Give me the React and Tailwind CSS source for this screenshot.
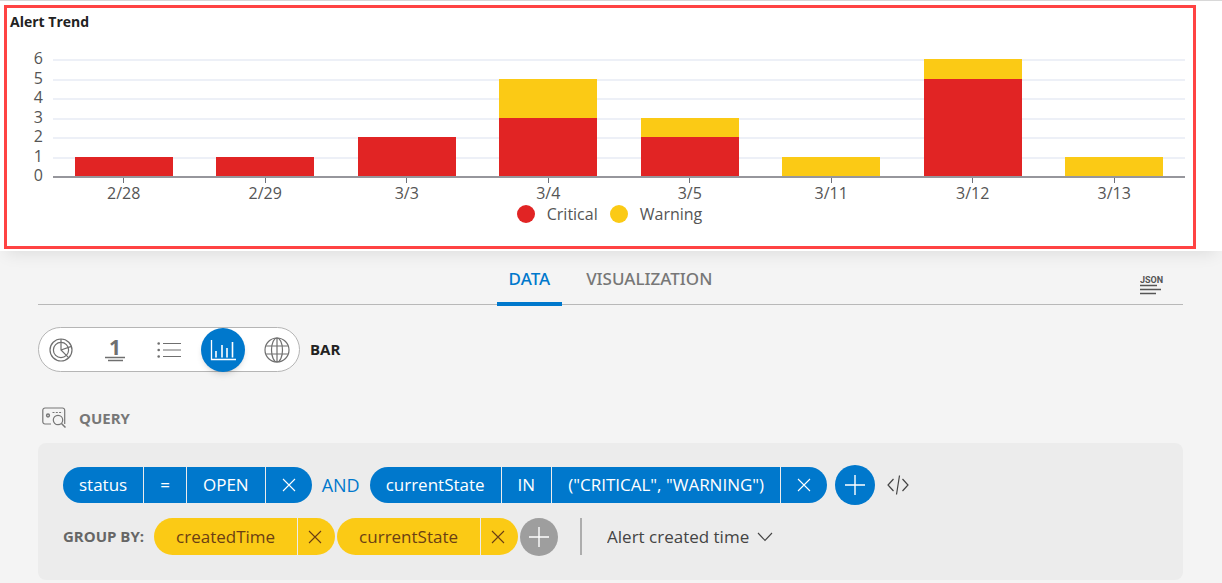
import React, { useState } from 'react';
import clsx from 'clsx';

const MAX = 6;

const trend = [
  { day: '2/28', critical: 1, warning: 0 },
  { day: '2/29', critical: 1, warning: 0 },
  { day: '3/3', critical: 2, warning: 0 },
  { day: '3/4', critical: 3, warning: 2 },
  { day: '3/5', critical: 2, warning: 1 },
  { day: '3/11', critical: 0, warning: 1 },
  { day: '3/12', critical: 5, warning: 1 },
  { day: '3/13', critical: 0, warning: 1 },
];

const levels = [6, 5, 4, 3, 2, 1, 0];

const filters = [
  { field: 'status', op: '=', value: 'OPEN' },
  { field: 'currentState', op: 'IN', value: '("CRITICAL", "WARNING")' },
];

const groups = ['createdTime', 'currentState'];

const PieIcon = () => (
  <svg width="24" height="24" viewBox="0 0 24 24" fill="none" stroke="currentColor" strokeWidth="1.2">
    <circle cx="12" cy="12" r="11" />
    <circle cx="12" cy="12" r="7.6" />
    <path d="M12 1v11l7.8 7.8M12 12l10.4-3.6" />
  </svg>
);

const NumberIcon = () => (
  <svg width="22" height="36" viewBox="0 -7 22 36">
    <text x="11" y="16" textAnchor="middle" fontSize="21" fontWeight="700" fill="currentColor">1</text>
    <path d="M1 18.5h20M4 21.5h15" stroke="currentColor" strokeWidth="1.3" />
  </svg>
);

const ListIcon = () => (
  <svg width="24" height="18" viewBox="0 0 24 18" stroke="currentColor" strokeWidth="1.2">
    <path d="M6 2.5h18M6 9h18M6 15.5h18" />
    <g fill="currentColor" stroke="none">
      <circle cx="1.7" cy="2.5" r="1.3" />
      <circle cx="1.7" cy="9" r="1.3" />
      <circle cx="1.7" cy="15.5" r="1.3" />
    </g>
  </svg>
);

const BarIcon = () => (
  <svg width="26" height="22" viewBox="0 0 26 22" fill="none" stroke="currentColor">
    <path d="M1.5 1v19.5H26" strokeWidth="1.3" />
    <path d="M6 12v6.5M12 6v12.5M17 9v9.5M22.5 3v15.5" strokeWidth="1.6" />
  </svg>
);

const GlobeIcon = () => (
  <svg width="26" height="26" viewBox="0 0 26 26" fill="none" stroke="currentColor" strokeWidth="1.2">
    <circle cx="13" cy="13" r="12" />
    <ellipse cx="13" cy="13" rx="5.5" ry="12" />
    <path d="M13 1v24M2.2 9h21.6M2.2 17h21.6" />
  </svg>
);

const QueryIcon = () => (
  <svg width="24" height="21" viewBox="0 0 24 21" fill="none" stroke="currentColor" strokeWidth="1.2">
    <path d="M9 17H3a2.2 2.2 0 0 1-2.2-2.2V3.2A2.2 2.2 0 0 1 3 1h17.5a2.2 2.2 0 0 1 2.2 2.2V17" />
    <circle cx="6" cy="8.5" r="1.4" strokeWidth="1.5" />
    <path d="M10.5 5.5h10" strokeDasharray="2 1.3" />
    <circle cx="16" cy="13" r="4.7" />
    <path d="M19.5 16.5l4 4" strokeWidth="1.5" />
  </svg>
);

const JsonIcon = () => (
  <svg width="24" height="24" viewBox="0 0 24 24">
    <text x="0" y="10" fontSize="9" fontWeight="700" fontFamily="Roboto, sans-serif" fill="currentColor">JSON</text>
    <path d="M0 12.5h17M0 16.5h21M0 20.5h16" stroke="currentColor" strokeWidth="1.4" />
  </svg>
);

const CloseIcon = () => (
  <svg width="14" height="14" viewBox="0 0 14 14" stroke="currentColor" strokeWidth="1.1">
    <path d="M1 1l12 12M13 1L1 13" />
  </svg>
);

const PlusIcon = () => (
  <svg width="20" height="20" viewBox="0 0 20 20" stroke="currentColor" strokeWidth="1.4">
    <path d="M10 0v20M0 10h20" />
  </svg>
);

const CodeIcon = () => (
  <svg width="22" height="20" viewBox="0 0 22 20" fill="none" stroke="currentColor" strokeWidth="1.2">
    <path d="M6.5 4L1 10l5.5 6M15.5 4l5.5 6-5.5 6M12.5 0.5l-3 19" />
  </svg>
);

const ChevronIcon = () => (
  <svg width="16" height="10" viewBox="0 0 16 10" fill="none" stroke="currentColor" strokeWidth="1.1">
    <path d="M1 1l7 7.5L15 1" />
  </svg>
);

const chartTypes = [
  { id: 'PIE', Icon: PieIcon },
  { id: 'NUMBER', Icon: NumberIcon },
  { id: 'LIST', Icon: ListIcon },
  { id: 'BAR', Icon: BarIcon },
  { id: 'MAP', Icon: GlobeIcon },
];

const TrendChart = () => (
  <div className="border-3 border-[#ff4343] pl-[3px] pr-2 pt-1 pb-[22px]">
    <h2 className="text-sm leading-5 font-bold text-[#222]">Alert Trend</h2>

    <div className="mt-4 flex gap-[10px] text-base leading-5 text-[#555]">
      <div className="w-[33px] h-[133px] mt-[2px] flex flex-col justify-between text-right leading-4">
        {levels.map((n) => (
          <span key={n}>{n}</span>
        ))}
      </div>

      <div className="flex-1 pt-[11px]">
        <div className="grid h-[119px]">
          <div className="col-start-1 row-start-1 flex flex-col justify-between">
            {levels.map((n) => (
              <div key={n} className="h-[2px] bg-[#edf0f7]" />
            ))}
          </div>
          <div className="col-start-1 row-start-1 flex border-b-2 border-[#96969c]">
            {trend.map((d) => (
              <div key={d.day} className="flex-1 flex flex-col justify-end items-center">
                <div className="w-[69%] bg-[#fbca15]" style={{ height: `${(d.warning / MAX) * 100}%` }} />
                <div className="w-[69%] bg-[#e12424]" style={{ height: `${(d.critical / MAX) * 100}%` }} />
              </div>
            ))}
          </div>
        </div>
        <div className="flex">
          {trend.map((d) => (
            <div key={d.day} className="flex-1 flex flex-col items-center">
              <div className="w-px h-[5px] bg-[#6e7079]" />
              <span>{d.day}</span>
            </div>
          ))}
        </div>
      </div>
    </div>

    <div className="mt-px flex justify-center gap-3 pl-6 text-base leading-5 text-[#555]">
      <span className="flex items-center gap-3">
        <span className="size-[18px] rounded-full bg-[#e12424]" />
        Critical
      </span>
      <span className="flex items-center gap-3">
        <span className="size-[18px] rounded-full bg-[#fbca15]" />
        Warning
      </span>
    </div>
  </div>
);

const FilterChip = ({ filter }) => (
  <div className="h-9 flex gap-px rounded-full overflow-hidden text-white">
    <button className="bg-[#0078cc] px-4">{filter.field}</button>
    <button className="bg-[#0078cc] px-4">{filter.op}</button>
    <button className="bg-[#0078cc] px-4">{filter.value}</button>
    <button className="bg-[#0078cc] px-4" aria-label="Remove filter">
      <CloseIcon />
    </button>
  </div>
);

const App = () => {
  const [tab, setTab] = useState('DATA');
  const [chartType, setChartType] = useState('BAR');

  return (
    <div className="min-h-screen bg-[#f4f4f4] pb-[3px] font-['Open_Sans',sans-serif]">
      <div className="bg-white border-t border-[#d8d8d8] pt-1 pb-[2px] pl-1 pr-[26px] shadow-[0_8px_16px_-6px_rgba(0,0,0,0.1)]">
        <TrendChart />
      </div>

      <div className="pl-[38px] pr-[39px]">
        <div className="grid grid-cols-[1fr_auto_1fr] h-[54px] border-b border-[#b8b8b8]">
          <div className="col-start-2 flex gap-3 h-[55px]">
            {['DATA', 'VISUALIZATION'].map((name) => (
              <button
                key={name}
                onClick={() => setTab(name)}
                className={clsx(
                  'px-3 pt-1 text-[17px] font-medium border-b-4 font-["Noto_Sans",sans-serif]',
                  tab === name ? 'text-[#0078cc] border-[#0078cc]' : 'text-[#777] border-transparent'
                )}
              >
                {name}
              </button>
            ))}
          </div>
          <button className="justify-self-end self-center mt-3 mr-[19px] text-[#555]" aria-label="JSON">
            <JsonIcon />
          </button>
        </div>

        <div className="mt-[22px] flex items-center gap-[10px]">
          <div className="h-[45px] flex items-center gap-[10px] bg-white border border-[#b5b5b5] rounded-full">
            {chartTypes.map(({ id, Icon }) => (
              <button
                key={id}
                aria-label={id}
                onClick={() => setChartType(id)}
                className={clsx(
                  'size-11 rounded-full flex items-center justify-center',
                  chartType === id ? 'bg-[#0078cc] text-white shadow-md' : 'text-[#6f6f6f]'
                )}
              >
                <Icon />
              </button>
            ))}
          </div>
          <span className="text-[15px] font-bold text-[#222]">{chartType}</span>
        </div>

        <div className="mt-[35px] ml-1 flex items-center gap-[13px] text-[#777]">
          <QueryIcon />
          <h3 className="text-[15px] leading-5 font-bold">QUERY</h3>
        </div>

        <div className="mt-[15px] bg-[#ececec] rounded-lg px-[25px] pt-[22px] pb-[25px] flex flex-col gap-[13px] text-[17px]">
          <div className="h-10 flex items-center">
            <FilterChip filter={filters[0]} />
            <span className="px-[10px] text-lg text-[#0078cc]">AND</span>
            <FilterChip filter={filters[1]} />
            <button className="ml-2 size-10 rounded-full bg-[#0078cc] text-white flex items-center justify-center" aria-label="Add filter">
              <PlusIcon />
            </button>
            <button className="ml-3 text-[#444]" aria-label="Edit as code">
              <CodeIcon />
            </button>
          </div>

          <div className="h-[37px] flex items-center">
            <span className="mr-[10px] text-[15px] font-bold text-[#666]">GROUP BY:</span>
            {groups.map((name) => (
              <div key={name} className="h-full mr-[2px] flex gap-px rounded-full overflow-hidden text-[#6b3f14]">
                <button className="bg-[#fbca15] px-[22px]">{name}</button>
                <button className="bg-[#fbca15] pl-[10px] pr-[13px]" aria-label={`Remove ${name}`}>
                  <CloseIcon />
                </button>
              </div>
            ))}
            <button className="size-[38px] rounded-full bg-[#9e9e9e] text-white flex items-center justify-center" aria-label="Add group">
              <PlusIcon />
            </button>
            <div className="ml-[22px] mr-[25px] w-[2px] h-full bg-[#adadad]" />
            <label className="flex items-center gap-2 text-[#444]">
              <select aria-label="Time field" className="appearance-none field-sizing-content bg-transparent outline-none">
                <option>Alert created time</option>
              </select>
              <ChevronIcon />
            </label>
          </div>
        </div>
      </div>
    </div>
  );
};

export default App;
